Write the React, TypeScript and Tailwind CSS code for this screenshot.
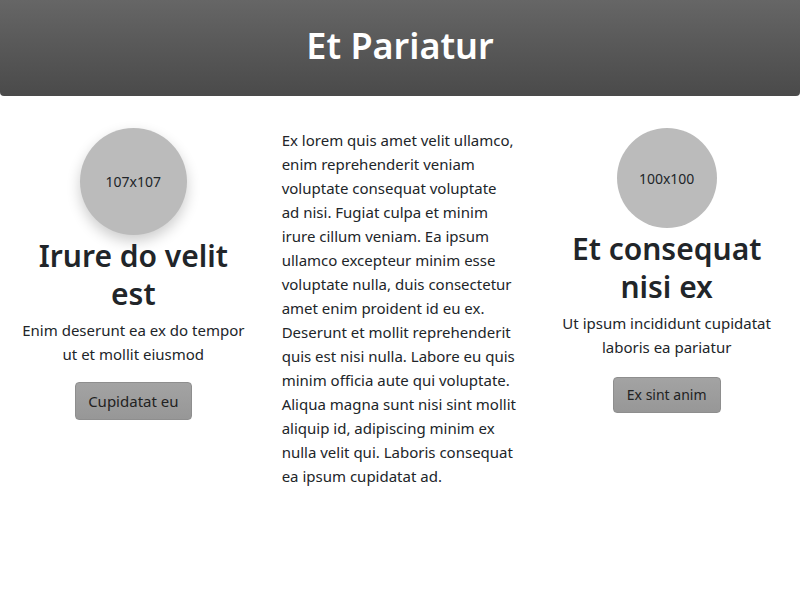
import React from 'react';

const font = { fontFamily: '"Noto Sans", "Open Sans", sans-serif' };

const bodyLines = [
  'Ex lorem quis amet velit ullamco,',
  'enim reprehenderit veniam',
  'voluptate consequat voluptate',
  'ad nisi. Fugiat culpa et minim',
  'irure cillum veniam. Ea ipsum',
  'ullamco excepteur minim esse',
  'voluptate nulla, duis consectetur',
  'amet enim proident id eu ex.',
  'Deserunt et mollit reprehenderit',
  'quis est nisi nulla. Labore eu quis',
  'minim officia aute qui voluptate.',
  'Aliqua magna sunt nisi sint mollit',
  'aliquip id, adipiscing minim ex',
  'nulla velit qui. Laboris consequat',
  'ea ipsum cupidatat ad.',
];

function Avatar({ size, label }: { size: 'lg' | 'md'; label: string }) {
  const dims =
    size === 'lg'
      ? 'w-[107px] h-[107px] shadow-[0_6px_14px_rgba(0,0,0,0.2)]'
      : 'w-[100px] h-[100px]';
  return (
    <div
      className={`${dims} mx-auto rounded-full bg-[#bbbbbb] flex items-center justify-center text-[14px] text-[#212529]`}
    >
      {label}
    </div>
  );
}

function Feature({
  size,
  label,
  title,
  text,
  cta,
  small,
}: {
  size: 'lg' | 'md';
  label: string;
  title: string;
  text: string;
  cta: string;
  small?: boolean;
}) {
  return (
    <div className="px-[15px] text-center text-[#212529]">
      <Avatar size={size} label={label} />
      <h2 className="mt-[2px] mb-[5px] px-[10px] text-[30px] leading-[38px] font-semibold">{title}</h2>
      <p className="text-[15px] leading-[24px]">{text}</p>
      <button
        className={`rounded-[4px] border border-[#8e8e8e] bg-gradient-to-b from-[#a3a3a3] to-[#979797] text-[#222] py-[6px] ${
          small ? 'mt-[18px] px-[13px] text-[14px] leading-[22px]' : 'mt-4 px-3 text-[15px] leading-[24px]'
        }`}
      >
        {cta}
      </button>
    </div>
  );
}

export default function App() {
  return (
    <div className="min-h-screen bg-white" style={font}>
      <header className="h-[96px] rounded-b-[4px] bg-gradient-to-b from-[#666666] to-[#4a4a4a] flex items-center justify-center">
        <h1 className="text-white text-[36px] font-semibold leading-none -mt-[4px]">Et Pariatur</h1>
      </header>

      <main className="grid grid-cols-3 mt-8">
        <Feature
          size="lg"
          label="107x107"
          title="Irure do velit est"
          text="Enim deserunt ea ex do tempor ut et mollit eiusmod"
          cta="Cupidatat eu"
        />
        <p className="px-[15px] text-[15px] leading-[24px] text-[#212529] whitespace-nowrap">
          {bodyLines.map((line, i) => (
            <React.Fragment key={i}>
              {line}
              {i < bodyLines.length - 1 && <br />}
            </React.Fragment>
          ))}
        </p>
        <Feature
          size="md"
          label="100x100"
          title="Et consequat nisi ex"
          text="Ut ipsum incididunt cupidatat laboris ea pariatur"
          cta="Ex sint anim"
          small
        />
      </main>
    </div>
  );
}
